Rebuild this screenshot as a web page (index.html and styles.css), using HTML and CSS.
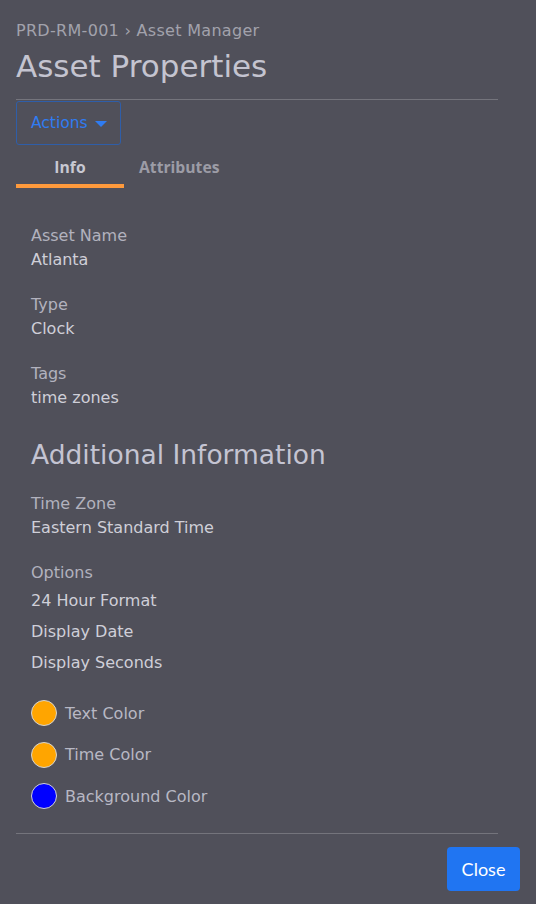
FILE: index.html
```html
<!DOCTYPE html>
<html lang="en">
<head>
<meta charset="utf-8">
<title>Asset Properties</title>
<link rel="stylesheet" href="styles.css">
</head>
<body>
<div class="modal">
  <header class="head">
    <div class="crumb">PRD-RM-001 › Asset Manager</div>
    <h1 class="title">Asset Properties</h1>
  </header>
  <div class="toolbar">
    <button class="actions">Actions <svg class="caret" width="12" height="6" viewBox="0 0 12 6"><path d="M0 0h12L6 6z" fill="currentColor"/></svg></button>
  </div>
  <nav class="tabs">
    <div class="tab active">Info</div>
    <div class="tab">Attributes</div>
  </nav>
  <section class="content">
    <div class="field"><div class="label">Asset Name</div><div class="value">Atlanta</div></div>
    <div class="field"><div class="label">Type</div><div class="value">Clock</div></div>
    <div class="field"><div class="label">Tags</div><div class="value">time zones</div></div>
    <h2 class="subhead">Additional Information</h2>
    <div class="field"><div class="label">Time Zone</div><div class="value">Eastern Standard Time</div></div>
    <div class="field">
      <div class="label">Options</div>
      <div class="option">24 Hour Format</div>
      <div class="option">Display Date</div>
      <div class="option">Display Seconds</div>
    </div>
    <div class="colors">
      <div class="color-row"><span class="swatch orange"></span><span class="color-label">Text Color</span></div>
      <div class="color-row"><span class="swatch orange"></span><span class="color-label">Time Color</span></div>
      <div class="color-row"><span class="swatch blue"></span><span class="color-label">Background Color</span></div>
    </div>
  </section>
  <footer class="foot">
    <button class="close">Close</button>
  </footer>
</div>
</body>
</html>
```
FILE: styles.css
```css
html, body {
  margin: 0;
  padding: 0;
  background: #50505a;
}
body {
  font-family: "DejaVu Sans", "Liberation Sans", sans-serif;
  color: #c4c4ce;
}
.modal {
  padding: 18px 16px 0 16px;
  min-height: 904px;
  box-sizing: border-box;
}
.head {
  margin-right: 22px;
  border-bottom: 1px solid #74747c;
}
.crumb {
  font-size: 16px;
  line-height: 24px;
  letter-spacing: 0.3px;
  color: #a2a2ac;
  padding-top: 1px;
}
.title {
  margin: 0;
  font-size: 31px;
  font-weight: 400;
  line-height: 38px;
  color: #c4c4d0;
  padding: 4px 0 14px;
}
.toolbar {
  display: flex;
  padding-top: 1px;
}
.actions {
  display: flex;
  align-items: center;
  gap: 7px;
  height: 44px;
  padding: 0 13px 0 14px;
  background: transparent;
  border: 1px solid #2f5ea8;
  border-radius: 3px;
  color: #2f7cf2;
  font-family: inherit;
  font-size: 15.5px;
}
.caret { margin-top: 1px; }
.tabs {
  display: flex;
  height: 43px;
}
.tab {
  min-width: 108px;
  padding: 4px 15px 0;
  box-sizing: border-box;
  display: flex;
  align-items: center;
  justify-content: center;
  font-family: "Open Sans", Lato, sans-serif;
  font-weight: 700;
  font-size: 15.7px;
  color: #9c9ca6;
  border-bottom: 4px solid transparent;
}
.tab.active {
  color: #c8c8d2;
  border-bottom-color: #ff9a3c;
}
.content {
  padding: 36px 15px 0;
}
.field { margin-bottom: 21px; }
.label, .value {
  font-size: 16px;
  line-height: 24px;
}
.label { color: #b2b2be; }
.value { color: #cfcfd8; }
.option {
  font-size: 16px;
  line-height: 31px;
  color: #cfcfd8;
}
.subhead {
  margin: 28px 0 20px;
  font-size: 26.5px;
  font-weight: 400;
  line-height: 34px;
  color: #c4c4d2;
}
.colors {
  display: flex;
  flex-direction: column;
  gap: 15.5px;
  margin-top: 22px;
}
.color-row {
  display: flex;
  align-items: center;
  gap: 8px;
  height: 26px;
}
.swatch {
  width: 26px;
  height: 26px;
  border-radius: 50%;
  box-sizing: border-box;
  border: 1px solid #d4d4d4;
}
.orange { background: #ffa500; }
.blue { background: #0000ff; }
.color-label {
  font-size: 16px;
  color: #b8b8c4;
}
.foot {
  margin-top: 24px;
  border-top: 1px solid #74747c;
  margin-right: 22px;
  display: flex;
  justify-content: flex-end;
  padding-top: 13px;
}
.close {
  margin-right: -22px;
  width: 73px;
  height: 44px;
  background: #2075f2;
  border: none;
  border-radius: 4px;
  color: #fff;
  font-family: Lato, "Open Sans", sans-serif;
  font-size: 18px;
}
```
